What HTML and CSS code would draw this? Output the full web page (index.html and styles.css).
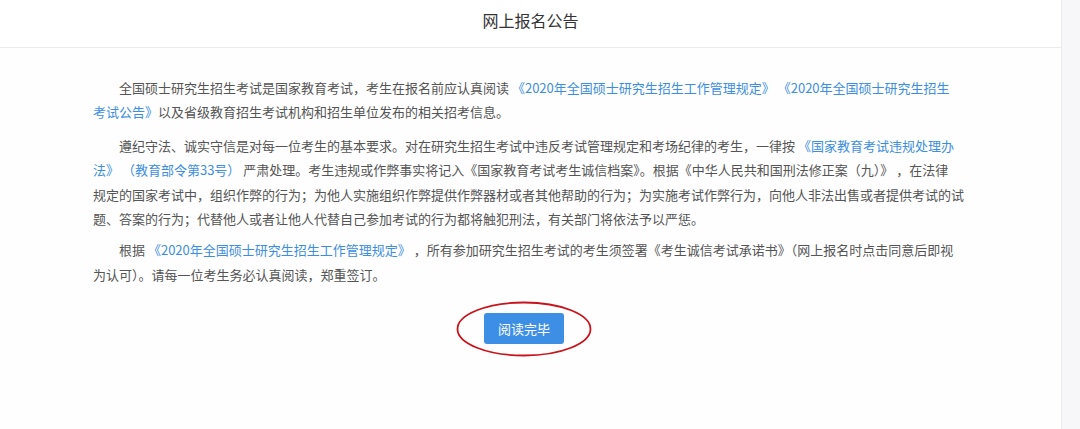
FILE: index.html
```html
<!DOCTYPE html>
<html lang="zh-CN">
<head>
<meta charset="utf-8">
<title>网上报名公告</title>
<link rel="stylesheet" href="styles.css">
</head>
<body>
<div class="page">
  <main class="panel">
    <header class="panel-head">网上报名公告</header>
    <section class="notice">
      <p>全国硕士研究生招生考试是国家教育考试，考生在报名前应认真阅读 <a class="link">《2020年全国硕士研究生招生工作管理规定》</a> <a class="link">《2020年全国硕士研究生招生<span class="nb">考试公告》</span></a>以及省级教育招生考试机构和招生单位发布的相关招考信息。</p>
      <p>遵纪守法、诚实守信是对每一位考生的基本要求。对在研究生招生考试中违反考试管理规定和考场纪律的考生，一律按 <a class="link">《国家教育考试违规处理办<span class="nb">法》 （教育</span>部令第33号）</a> 严肃处理。考生违规或作弊事实将记入《国家教育考试考生诚信档案》。根据《中华人民共和国刑法修正案（九）》 ，在法律<span class="nb">规定的</span>国家考试中，组织作弊的行为；为他人实施组织作弊提供作弊器材或者其他帮助的行为；为实施考试作弊行为，向他人非法出售或者提供考试的试题、答案的行为；代替他人或者让他人代替自己参加考试的行为都将触犯刑法，有关部门将依法予以严惩。</p>
      <p>根据 <a class="link">《2020年全国硕士研究生招生工作管理规定》</a> ，所有参加研究生招生考试的考生须签署《考生诚信考试承诺书》（网上报名时点击同意后即视<span class="nb">为认可）</span>。请每一位考生务必认真阅读，郑重签订。</p>
      <div class="actions">
        <div class="btn-wrap">
          <button class="btn" type="button">阅读完毕</button>
          <svg class="mark" width="136" height="56" viewBox="0 0 136 56" aria-hidden="true">
            <ellipse cx="68" cy="28" rx="66.5" ry="26.5" fill="none" stroke="#c8151d" stroke-width="1.8"/>
          </svg>
        </div>
      </div>
    </section>
  </main>
  <aside class="strip"></aside>
</div>
</body>
</html>
```

FILE: styles.css
```css
html, body {
  margin: 0;
  padding: 0;
  background: #ffffff;
}

body {
  font-family: "Noto Sans CJK SC", "Noto Sans", "Liberation Sans", sans-serif;
  color: #555555;
  height: 429px;
  overflow: hidden;
}

.page {
  display: flex;
  height: 429px;
}

.panel {
  width: 1061px;
  border-right: 1px solid #ebe9ec;
  background: #fefefe;
}

.strip {
  flex: 1;
  background: #f7f6f8;
}

.panel-head {
  height: 47px;
  line-height: 41px;
  text-align: center;
  font-size: 16px;
  color: #333333;
  border-bottom: 1px solid #eceaed;
  background: #ffffff;
}

.notice {
  width: 862px;
  padding: 28px 0 0 93px;
}

.notice p {
  margin: 0 -20px 9px 0;
  font-size: 13px;
  line-height: 24.4px;
  text-indent: 2em;
  color: #555555;
}

.notice p:nth-of-type(2) {
  margin-bottom: 7px;
}

.nb {
  white-space: nowrap;
}

.link {
  color: #3c8fe0;
  text-decoration: none;
}

.actions {
  display: flex;
  justify-content: center;
  padding-top: 17px;
}

.btn-wrap {
  position: relative;
}

.btn {
  display: block;
  width: 80px;
  height: 31px;
  border: none;
  border-radius: 3px;
  background: #3d8fe6;
  color: #ffffff;
  font-family: "Noto Sans CJK SC", "Noto Sans", sans-serif;
  font-size: 13px;
  padding: 0;
}

.mark {
  position: absolute;
  left: -28px;
  top: -12px;
  pointer-events: none;
}
```
